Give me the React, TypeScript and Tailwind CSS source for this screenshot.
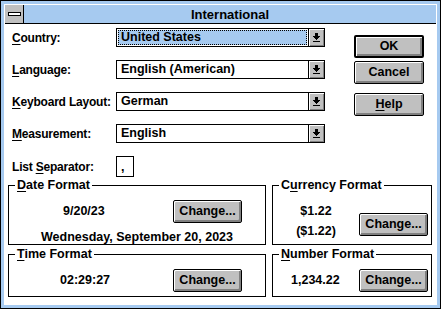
const fontCls = "font-['Liberation_Sans',Arial,sans-serif] font-bold text-[12.5px] leading-none text-black";

function U({ children }: { children: string }) {
  return <span className="underline underline-offset-[2px] decoration-1">{children}</span>;
}

function DropArrow() {
  return (
    <svg width="7" height="9" viewBox="0 0 7 9" shapeRendering="crispEdges">
      <rect x="2" y="0" width="3" height="3" fill="#000" />
      <rect x="0" y="3" width="7" height="1" fill="#000" />
      <rect x="1" y="4" width="5" height="1" fill="#000" />
      <rect x="2" y="5" width="3" height="1" fill="#000" />
      <rect x="3" y="6" width="1" height="1" fill="#000" />
      <rect x="0" y="8" width="7" height="1" fill="#000" />
    </svg>
  );
}

function Combo({ value, focused }: { value: string; focused?: boolean }) {
  return (
    <div className="flex h-[19px] w-[209px] shrink-0 border border-black bg-white">
      <div className="flex flex-1 items-center p-[1px]">
        <div
          className={
            focused
              ? "flex h-full w-full items-center border border-dotted border-black bg-[#a6caf0] pl-[2px]"
              : "flex h-full w-full items-center pl-[3px]"
          }
        >
          {value}
        </div>
      </div>
      <div className="flex w-[16px] items-center justify-center border-l border-black bg-[#c0c0c0] shadow-[inset_1px_1px_0_#fff,inset_-1px_-1px_0_#808080]">
        <DropArrow />
      </div>
    </div>
  );
}

function Button({ children, isDefault, w = "w-[70px]" }: { children: React.ReactNode; isDefault?: boolean; w?: string }) {
  return (
    <div
      className={
        (isDefault ? "border-2 " : "border ") +
        w +
        " flex h-[23px] items-center justify-center rounded-[2px] border-black bg-[#c0c0c0] shadow-[inset_1px_1px_0_#fff,inset_-2px_-2px_0_#808080]"
      }
    >
      {children}
    </div>
  );
}

function Group({ legend, className, children }: { legend: React.ReactNode; className: string; children: React.ReactNode }) {
  return (
    <div className={"relative border border-black " + className}>
      <div className="absolute -top-[7px] left-[6px] bg-white px-[2px]">{legend}</div>
      {children}
    </div>
  );
}

const labelCls = "w-[104px] shrink-0 whitespace-nowrap text-[12px] tracking-[-0.2px]";

export default function App() {
  const rows: { label: React.ReactNode; value: string; focused?: boolean }[] = [
    { label: <><U>C</U>ountry:</>, value: "United States", focused: true },
    { label: <><U>L</U>anguage:</>, value: "English (American)" },
    { label: <><U>K</U>eyboard Layout:</>, value: "German" },
    { label: <><U>M</U>easurement:</>, value: "English" },
  ];

  return (
    <div className={"h-[309px] w-[441px] border border-black bg-[#a6caf0] p-[3px] " + fontCls}>
      <div className="flex h-full w-full flex-col border border-white bg-white">
        <div className="flex h-[19px] border-b border-black bg-[#a6caf0]">
          <div className="flex w-[19px] items-center justify-center border-r border-black bg-[#c0c0c0]">
            <div className="h-[4px] w-[13px] border border-black bg-white" />
          </div>
          <div className="flex flex-1 items-center justify-center text-[13px]">International</div>
        </div>

        <div className="flex pl-[7px] pt-[4px]">
          <div className="flex flex-col">
            {rows.map((r, i) => (
              <div key={i} className="mb-[13px] flex items-center">
                <div className={labelCls}>{r.label}</div>
                <Combo value={r.value} focused={r.focused} />
              </div>
            ))}
            <div className="flex items-center">
              <div className={labelCls}>
                List <U>S</U>eparator:
              </div>
              <div className="flex h-[21px] w-[18px] items-end border border-black pb-[3px] pl-[4px]">,</div>
            </div>
          </div>
          <div className="ml-[29px] flex flex-col gap-[3px] pt-[7px]">
            <Button isDefault>OK</Button>
            <Button>Cancel</Button>
            <div className="mt-[6px]">
              <Button>
                <U>H</U>elp
              </Button>
            </div>
          </div>
        </div>

        <div className="mt-[8px] grid grid-cols-[258px_160px] gap-x-[6px] gap-y-[9px] pl-[3px]">
          <Group legend={<><U>D</U>ate Format</>} className="h-[60px]">
            <div className="flex items-center pl-[54px] pt-[14px]">
              <div className="w-[110px]">9/20/23</div>
              <Button w="w-[69px]">Change...</Button>
            </div>
            <div className="pl-[32px] pt-[8px]">Wednesday, September 20, 2023</div>
          </Group>
          <Group legend={<>C<U>u</U>rrency Format</>} className="h-[60px]">
            <div className="flex items-start">
              <div className="flex w-[86px] flex-col items-center gap-[7px] pt-[19px]">
                <div>$1.22</div>
                <div>($1.22)</div>
              </div>
              <div className="pt-[27px]">
                <Button w="w-[69px]">Change...</Button>
              </div>
            </div>
          </Group>
          <Group legend={<><U>T</U>ime Format</>} className="h-[43px]">
            <div className="flex items-center pl-[51px] pt-[14px]">
              <div className="w-[113px]">02:29:27</div>
              <Button w="w-[69px]">Change...</Button>
            </div>
          </Group>
          <Group legend={<><U>N</U>umber Format</>} className="h-[43px]">
            <div className="flex items-center pl-[18px] pt-[14px]">
              <div className="w-[68px]">1,234.22</div>
              <Button w="w-[69px]">Change...</Button>
            </div>
          </Group>
        </div>
      </div>
    </div>
  );
}
